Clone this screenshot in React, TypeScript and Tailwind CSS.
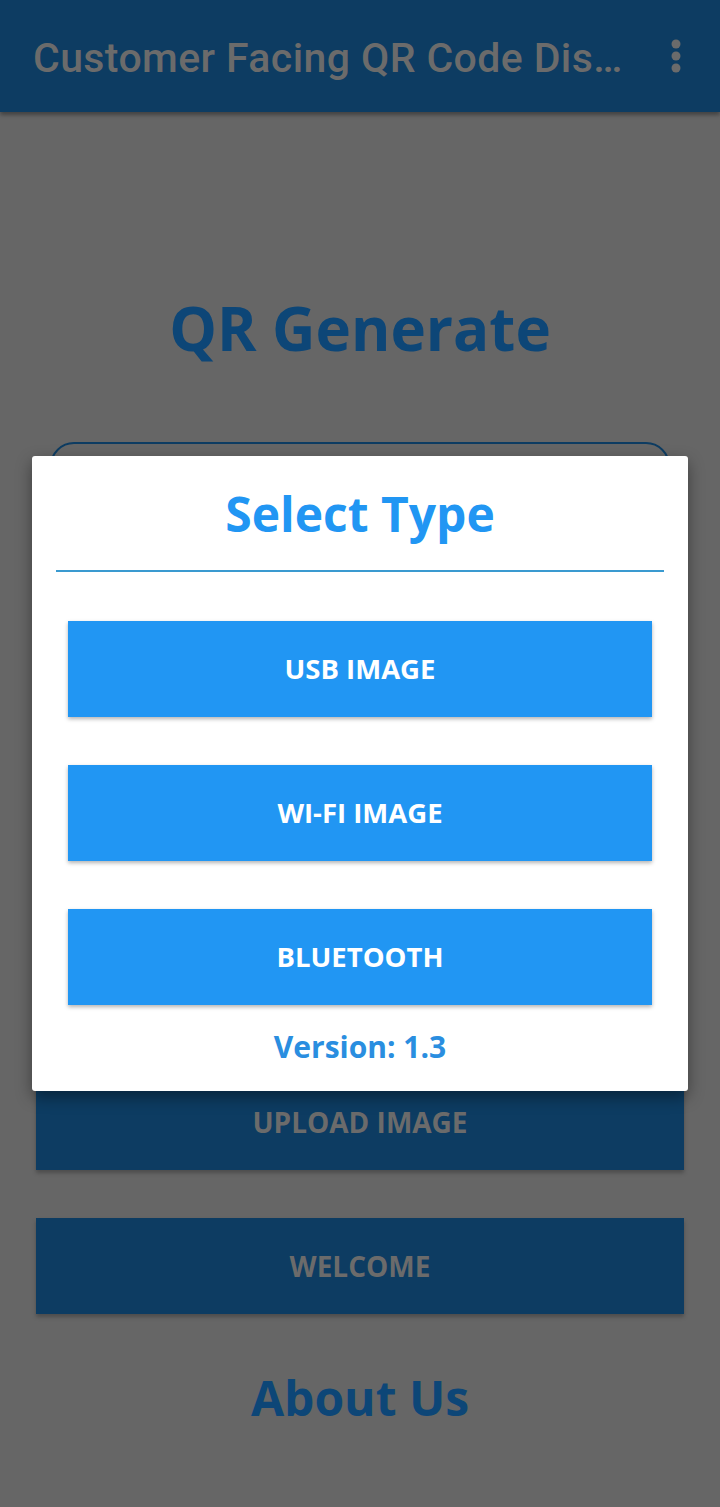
import React from "react";

export default function App() {
  const btn =
    "h-[96px] w-full bg-[#0d3c62] flex items-center justify-center text-[#6b6b6b] font-bold text-[28px] shadow-[0_3px_4px_rgba(0,0,0,0.25)]";
  const dbtn =
    "h-[96px] w-full bg-[#2196f3] flex items-center justify-center text-white font-bold text-[27.5px] shadow-[0_2px_4px_rgba(0,0,0,0.3)]";
  return (
    <div
      className="relative w-[720px] h-[1507px] bg-[#666666] overflow-hidden"
      style={{ fontFamily: "'Open Sans', 'Noto Sans', sans-serif" }}
    >
      {/* app bar */}
      <div className="h-[112px] bg-[#0d3c62] flex items-center pt-[6px] pl-[33px] pr-[38px] shadow-[0_3px_4px_rgba(0,0,0,0.35)] relative z-10">
        <div
          className="flex-1 text-[41px] font-medium tracking-[0.4px] text-[#6b6b6b] whitespace-nowrap overflow-hidden"
          style={{ fontFamily: "Roboto, 'Noto Sans', sans-serif" }}
        >
          Customer Facing QR Code Dis…
        </div>
        <svg width="12" height="36" viewBox="0 0 12 36" className="ml-6 -mt-[6px]">
          <circle cx="6" cy="6" r="4.5" fill="#6b6b6b" />
          <circle cx="6" cy="18" r="4.5" fill="#6b6b6b" />
          <circle cx="6" cy="30" r="4.5" fill="#6b6b6b" />
        </svg>
      </div>

      {/* underlying page */}
      <div className="flex flex-col items-center">
        <div className="mt-[180px] text-[60px] leading-[72px] font-bold text-[#0d4677]">
          QR Generate
        </div>
        <div className="mt-[78px] w-[620px] h-[520px] rounded-[24px] border-2 border-[#0d3c62]" />
        <div className="w-[648px] flex flex-col gap-[48px] mt-[112px]">
          <div className={btn}>UPLOAD IMAGE</div>
          <div className={btn}>WELCOME</div>
        </div>
        <div className="mt-[52px] text-[48px] leading-[64px] font-bold text-[#0d4677]">
          About Us
        </div>
      </div>

      {/* dialog */}
      <div className="absolute left-[32px] top-[456px] w-[656px] h-[635px] bg-white rounded-[3px] flex flex-col items-center z-20 shadow-[0_6px_16px_rgba(0,0,0,0.4)]">
        <div className="mt-[26px] text-[48px] leading-[64px] font-bold text-[#2196f3]">
          Select Type
        </div>
        <div className="mt-[24px] w-[608px] h-[2px] bg-[#3a9ad0]" />
        <div className="mt-[49px] w-[584px] flex flex-col gap-[48px]">
          <div className={dbtn}>USB IMAGE</div>
          <div className={dbtn}>WI-FI IMAGE</div>
          <div className={dbtn}>BLUETOOTH</div>
        </div>
        <div className="mt-[21px] text-[30px] leading-[42px] font-bold text-[#2a8ee0]">
          Version: 1.3
        </div>
      </div>
    </div>
  );
}
